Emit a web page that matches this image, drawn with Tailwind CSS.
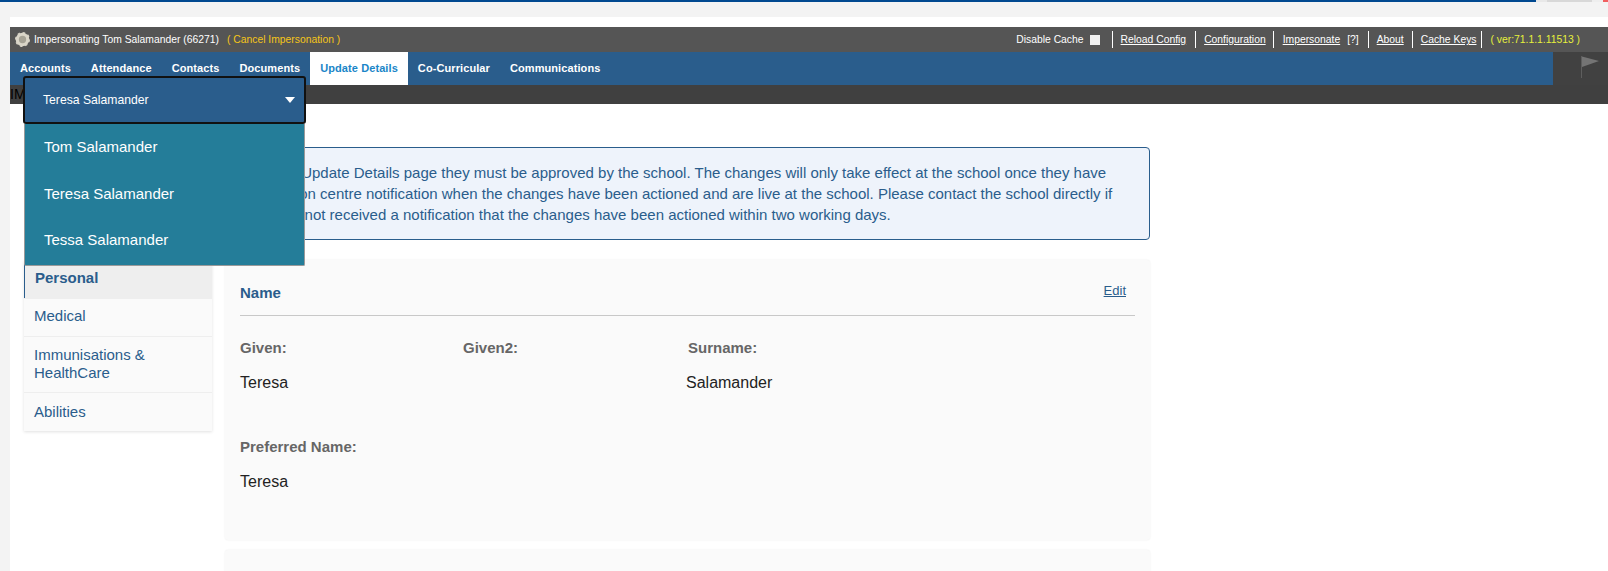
<!DOCTYPE html>
<html lang="en">
<head>
    <meta charset="UTF-8">
    <meta name="viewport" content="width=device-width, initial-scale=1.0">
    <title>Update Details</title>
    <script src="https://cdn.jsdelivr.net/npm/@tailwindcss/browser@4"></script>
</head>
<body class="bg-white h-[571px] overflow-hidden font-['Liberation_Sans',Arial,sans-serif]">
    <!-- browser strip -->
    <div class="flex h-[2px]">
        <div class="flex-1 bg-[#004990]"></div>
        <div class="w-[11px] bg-[#e8e8e8]"></div>
        <div class="w-[45px] bg-[#d8d8d8]"></div>
        <div class="w-[11px] bg-[#eeeeee]"></div>
        <div class="w-[5px] bg-[#f06060]"></div>
    </div>
    <div class="h-[15px] bg-[#f3f3f3]"></div>

    <div class="flex h-[554px]">
        <div class="w-[10px] bg-[#f3f3f3]"></div>
        <div class="relative flex-1 min-w-0">
            <div class="h-[10px]"></div>

            <!-- admin bar -->
            <div class="flex items-center justify-between h-[25px] bg-[#555555] text-[10.35px] text-white pl-[5px] pr-[28px]">
                <div class="flex items-center">
                    <svg class="w-[15px] h-[15px] mr-[4px]" viewBox="0 0 16 16">
                        <circle cx="8" cy="8" r="5.6" fill="#a5a295" stroke="#d9d5c8" stroke-width="3.4"></circle>
                        <circle cx="8" cy="8" r="7.2" fill="none" stroke="#d9d5c8" stroke-width="1.6" stroke-dasharray="2.6 3.05"></circle>
                    </svg>
                    <span>Impersonating Tom Salamander (66271)</span>
                    <span class="ml-[8px] text-[#f5c518]">( Cancel Impersonation )</span>
                </div>
                <div class="flex items-center">
                    <span>Disable Cache</span>
                    <span class="w-[10px] h-[10px] bg-[#f0f0f0] ml-[6px] mr-[12px]"></span>
                    <a class="underline border-l border-white pl-[8px] pr-[9px] leading-[17px]">Reload Config</a>
                    <a class="underline border-l border-white pl-[8px] pr-[7px] leading-[17px]">Configuration</a>
                    <span class="border-l border-white pl-[9px] pr-[9px] leading-[17px]"><a class="underline mr-[7px]">Impersonate</a>[?]</span>
                    <a class="underline border-l border-white pl-[8px] pr-[8px] leading-[17px]">About</a>
                    <a class="underline border-l border-white pl-[8px] pr-[5px] leading-[17px]">Cache Keys</a>
                    <span class="border-l border-white pl-[8px] leading-[17px] text-[#e6f03c]">( ver:71.1.1.11513 )</span>
                </div>
            </div>

            <!-- nav -->
            <div class="flex h-[33px] bg-[#414141]">
                <div class="flex flex-1 bg-[#2a5d8c] text-[11px] font-bold tracking-[0.09px] text-white">
                    <a class="px-[10px] pt-[8px]">Accounts</a>
                    <a class="px-[10px] pt-[8px]">Attendance</a>
                    <a class="px-[10px] pt-[8px]">Contacts</a>
                    <a class="px-[10px] pt-[8px]">Documents</a>
                    <a class="px-[10px] pt-[8px] bg-white text-[#1a86c8]">Update Details</a>
                    <a class="px-[10px] pt-[8px]">Co-Curricular</a>
                    <a class="px-[10px] pt-[8px]">Communications</a>
                </div>
                <div class="w-[55px] pl-[28px] pt-[4px]">
                    <svg class="w-[18px] h-[22px]" viewBox="0 0 18 22">
                        <path d="M0.5 0V22" stroke="#5e5e5e" stroke-width="1"></path>
                        <path d="M1 0.5L18 5L1 11Z" fill="#747474"></path>
                    </svg>
                </div>
            </div>
            <div class="h-[19px] bg-[#404040] text-[14px] leading-[19px] text-black overflow-hidden">IM</div>

            <!-- page body -->
            <div class="flex items-start pl-[14px] pt-[43px]">
                <div class="w-[188px] mt-[113px] bg-[#fafafa] shadow-[0_1px_3px_rgba(0,0,0,0.12)] text-[15px] text-[#2a5d8c]">
                    <div class="h-[38px] bg-[#eeeeee] border-l border-[#2a5d8c] pl-[10px] pt-[7px] font-bold text-[#2a5d8c]">Personal</div>
                    <div class="h-[38px] border-t border-[#eeeeee] pl-[10px] pt-[6px]">Medical</div>
                    <div class="h-[56px] border-t border-[#eeeeee] pl-[10px] pt-[9px] leading-[18px]">Immunisations &amp;<br>HealthCare</div>
                    <div class="h-[39px] border-t border-[#eeeeee] pl-[10px] pt-[8px]">Abilities</div>
                </div>

                <div class="w-[925px] ml-[13px]">
                    <div class="h-[93px] bg-[#eef3fb] border border-[#2a5d8c] rounded-[4px] text-[15px] leading-[21px] text-[#2a5d8c] whitespace-nowrap pt-[14px]">
                        <div class="pl-[26px]">On the Update Details page they must be approved by the school. The changes will only take effect at the school once they have</div>
                        <div class="ml-[-11px]">communication centre notification when the changes have been actioned and are live at the school. Please contact the school directly if</div>
                        <div class="pl-[1px]">If you have not received a notification that the changes have been actioned within two working days.</div>
                    </div>

                    <div class="relative h-[280px] mt-[20px] bg-[#fafafa] rounded-[3px] shadow-[0_0_2px_rgba(0,0,0,0.08)] px-[15px]">
                        <div class="flex justify-between h-[56px] border-b border-[#c8c8c8] pt-[22px]">
                            <span class="text-[15px] font-bold text-[#2a5d8c]">Name</span>
                            <a class="text-[13px] mr-[9px] mt-[-1px] underline text-[#2a5d8c]">Edit</a>
                        </div>
                        <div class="grid grid-cols-[223px_225px_1fr] pt-[21px] text-[15px] font-bold text-[#666666]">
                            <span>Given:</span>
                            <span>Given2:</span>
                            <span>Surname:</span>
                        </div>
                        <div class="grid grid-cols-[223px_223px_1fr] pt-[11px] text-[16px] text-[#222222]">
                            <span>Teresa</span>
                            <span></span>
                            <span>Salamander</span>
                        </div>
                        <div class="pt-[41px] text-[15px] font-bold text-[#666666]">Preferred Name:</div>
                        <div class="pt-[12px] text-[16px] text-[#222222]">Teresa</div>
                    </div>
                    <div class="h-[40px] mt-[10px] bg-[#fafafa] rounded-[3px] shadow-[0_0_2px_rgba(0,0,0,0.08)]"></div>
                </div>
            </div>

            <!-- student dropdown, open over the page -->
            <div class="absolute left-[13px] top-[59px] w-[283px] z-10">
                <div class="flex items-center justify-between h-[48px] bg-[#2a5d8c] border-2 border-[#111111] rounded-[3px] pl-[18px] pr-[9px] text-[12.2px] text-white">
                    <span>Teresa Salamander</span>
                    <span class="w-0 h-0 border-x-[5px] border-x-transparent border-t-[6px] border-t-white"></span>
                </div>
                <div class="mx-[1px] h-[142px] bg-[#247d99] border-x border-b border-[#9a9a9a] rounded-b-[2px] text-[15px] text-white pl-[19px]">
                    <div class="h-[47px] pt-[12px]">Tom Salamander</div>
                    <div class="h-[47px] pt-[12px]">Teresa Salamander</div>
                    <div class="h-[47px] pt-[11px]">Tessa Salamander</div>
                </div>
            </div>
        </div>
    </div>
</body>
</html>
